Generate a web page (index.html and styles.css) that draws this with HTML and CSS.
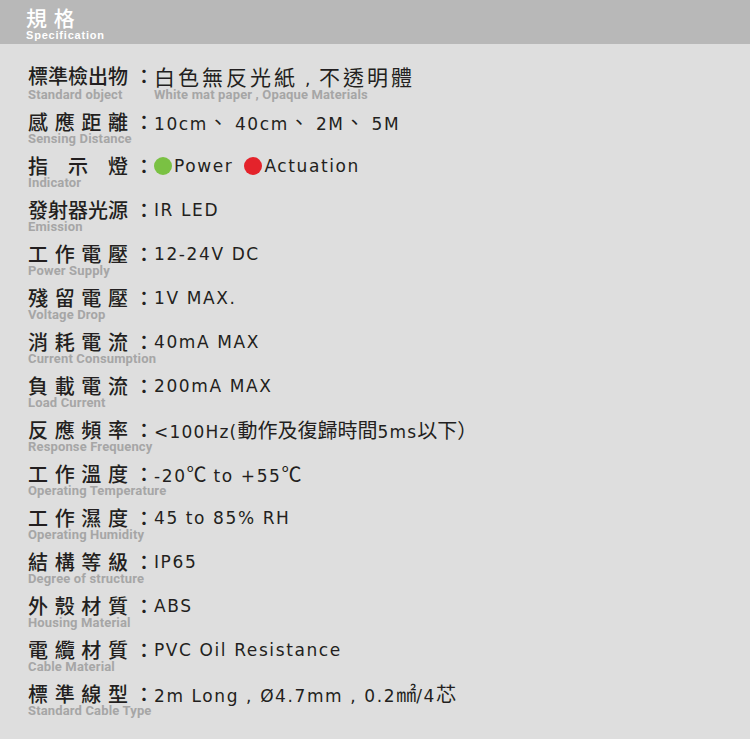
FILE: index.html
```html
<!DOCTYPE html>
<html lang="zh-Hant">
  <head>
    <meta charset="UTF-8" />
    <meta name="viewport" content="width=device-width, initial-scale=1.0" />
    <title>規格 - Specification</title>
    <link rel="stylesheet" href="styles.css">
  </head>
  <body>
    <header class="specHeader">
      <h1>規 格</h1>
      <span>Specification</span>
    </header>
    <div class="specList">
      <div class="row first">
        <span class="label">標準檢出物</span>
        <span class="colon">：</span>
        <span class="value"><span class="zh wide">白色無反光紙</span> , <span class="zh wide">不透明體</span></span>
        <span class="en">Standard object</span>
        <span class="en enValue">White mat paper , Opaque Materials</span>
      </div>
      <div class="row">
        <span class="label">感應距離</span>
        <span class="colon">：</span>
        <span class="value">10cm<span class="zh">、</span> 40cm<span class="zh">、</span> 2M<span class="zh">、</span> 5M</span>
        <span class="en">Sensing Distance</span>
      </div>
      <div class="row">
        <span class="label">指示燈</span>
        <span class="colon">：</span>
        <span class="value"><i class="dot green"></i>Power <i class="dot red"></i>Actuation</span>
        <span class="en">Indicator</span>
      </div>
      <div class="row">
        <span class="label">發射器光源</span>
        <span class="colon">：</span>
        <span class="value">IR LED</span>
        <span class="en">Emission</span>
      </div>
      <div class="row">
        <span class="label">工作電壓</span>
        <span class="colon">：</span>
        <span class="value">12-24V DC</span>
        <span class="en">Power Supply</span>
      </div>
      <div class="row">
        <span class="label">殘留電壓</span>
        <span class="colon">：</span>
        <span class="value">1V MAX.</span>
        <span class="en">Voltage Drop</span>
      </div>
      <div class="row">
        <span class="label">消耗電流</span>
        <span class="colon">：</span>
        <span class="value">40mA MAX</span>
        <span class="en">Current Consumption</span>
      </div>
      <div class="row">
        <span class="label">負載電流</span>
        <span class="colon">：</span>
        <span class="value">200mA MAX</span>
        <span class="en">Load Current</span>
      </div>
      <div class="row">
        <span class="label">反應頻率</span>
        <span class="colon">：</span>
        <span class="value tight">&lt;100Hz(<span class="zh">動作及復歸時間</span>5ms<span class="zh">以下）</span></span>
        <span class="en">Response Frequency</span>
      </div>
      <div class="row">
        <span class="label">工作溫度</span>
        <span class="colon">：</span>
        <span class="value">-20<span class="zh">℃</span> to +55<span class="zh">℃</span></span>
        <span class="en">Operating Temperature</span>
      </div>
      <div class="row">
        <span class="label">工作濕度</span>
        <span class="colon">：</span>
        <span class="value">45 to 85% RH</span>
        <span class="en">Operating Humidity</span>
      </div>
      <div class="row">
        <span class="label">結構等級</span>
        <span class="colon">：</span>
        <span class="value">IP65</span>
        <span class="en">Degree of structure</span>
      </div>
      <div class="row">
        <span class="label">外殼材質</span>
        <span class="colon">：</span>
        <span class="value">ABS</span>
        <span class="en">Housing Material</span>
      </div>
      <div class="row">
        <span class="label">電纜材質</span>
        <span class="colon">：</span>
        <span class="value">PVC Oil Resistance</span>
        <span class="en">Cable Material</span>
      </div>
      <div class="row">
        <span class="label">標準線型</span>
        <span class="colon">：</span>
        <span class="value">2m Long , Ø4.7mm , 0.2<span class="zh">㎟</span>/4<span class="zh">芯</span></span>
        <span class="en">Standard Cable Type</span>
      </div>
    </div>
  </body>
</html>
```

FILE: styles.css
```css
body {
  margin: 0;
  background-color: #dedede;
  color: #231f20;
  font-family: "Noto Sans CJK TC", "Noto Sans", sans-serif;
}
.specHeader {
  background-color: #b8b8b8;
  height: 44px;
  padding: 5px 0 0 26px;
  box-sizing: border-box;
  color: #ffffff;
}
.specHeader > h1 {
  margin: 0;
  font-size: 21px;
  font-weight: 500;
  line-height: 24px;
  letter-spacing: 1px;
}
.specHeader > span {
  display: block;
  font-family: "Liberation Sans", Arial, sans-serif;
  font-weight: 700;
  font-size: 11px;
  line-height: 12px;
  letter-spacing: 0.8px;
}
.specList {
  padding: 22px 0 0 28px;
}
.row {
  display: grid;
  grid-template-columns: 100px 26px 1fr;
  grid-template-rows: 20px 14px;
  margin-bottom: 10px;
}
.row.first {
  grid-template-rows: 20px 16px;
}
.row > .label {
  font-size: 20px;
  font-weight: 500;
  line-height: 20px;
  text-align: justify;
  text-align-last: justify;
  white-space: nowrap;
}
.row > .colon {
  font-size: 20px;
  font-weight: 500;
  line-height: 20px;
  padding-left: 6px;
}
.row > .value {
  height: 20px;
  font-family: "DejaVu Sans", "Noto Sans CJK TC", sans-serif;
  font-size: 17px;
  line-height: 20px;
  letter-spacing: 1.6px;
  white-space: nowrap;
}
.row > .value.tight {
  letter-spacing: 1.2px;
}
.zh {
  font-family: "Noto Sans CJK TC", sans-serif;
  font-size: 20px;
  line-height: 20px;
  letter-spacing: 0;
}
.zh.wide {
  font-size: 21px;
  letter-spacing: 3px;
}
.dot {
  display: inline-block;
  vertical-align: -3px;
  width: 18px;
  height: 18px;
  border-radius: 50%;
  margin-right: 2px;
}
.dot.green {
  background-color: #7ac143;
}
.dot.red {
  background-color: #e4232b;
  margin-left: 4px;
}
.row > .en {
  grid-column: 1 / 3;
  font-family: "Roboto", "Liberation Sans", sans-serif;
  font-weight: 700;
  font-size: 13px;
  line-height: 14px;
  letter-spacing: 0.15px;
  color: #a6a6a6;
  white-space: nowrap;
}
.row > .en.enValue {
  grid-column: 3;
}
.row.first > .en {
  margin-top: 2px;
}
```
